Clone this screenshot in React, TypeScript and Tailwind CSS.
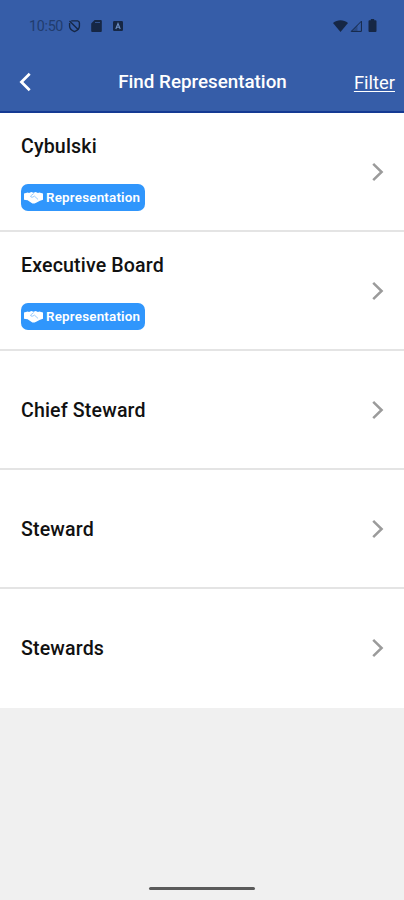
interface Group {
  name: string;
  representation?: boolean;
}

const GROUPS: Group[] = [
  { name: "Cybulski", representation: true },
  { name: "Executive Board", representation: true },
  { name: "Chief Steward" },
  { name: "Steward" },
  { name: "Stewards" },
];

function StatusBar() {
  return (
    <div className="flex h-[52px] items-center justify-between pl-[29px] pr-[26px] text-[#162745]">
      <div className="flex items-center">
        <span className="w-[34px] whitespace-nowrap pt-px text-[14.3px] leading-none tracking-[-0.3px] text-[#213c6e]">10:50</span>
        <svg className="ml-[5px]" width="13" height="14" viewBox="0 0 13 14" fill="none" stroke="currentColor" strokeWidth="1.4">
          <path d="M3.2 1.9H9.6Q11.4 2.2 11.4 4V7.2C11.4 9.7 9.3 11.4 6.5 12.6 3.7 11.4 1.6 9.7 1.6 7.2V4" />
          <path d="M1.5 2 10.4 10.8" />
        </svg>
        <svg className="ml-[10px]" width="11" height="12" viewBox="0 0 11 12" fill="currentColor">
          <path d="M3.6 0H9.8a1 1 0 0 1 1 1V11a1 1 0 0 1-1 1H1.2a1 1 0 0 1-1-1V3.4Z" />
          <path d="M4 2.5h5" stroke="#315390" strokeWidth="1" />
        </svg>
        <svg className="ml-[11px]" width="10" height="10" viewBox="0 0 10 10">
          <rect width="10" height="10" rx="1.2" fill="currentColor" />
          <path d="M2.8 8 5 2.5 7.2 8M3.7 6.2h2.6" fill="none" stroke="#6e91c6" strokeWidth="1.1" />
        </svg>
      </div>
      <div className="flex items-center pb-px">
        <svg width="15" height="12" viewBox="0 0 15 12" fill="currentColor">
          <path d="M0 3C4.3-.7 10.7-.7 15 3L7.5 12Z" />
        </svg>
        <svg className="ml-[2px]" width="12" height="12" viewBox="0 0 12 12" fill="none" stroke="currentColor">
          <path d="M1.2 11.4 11.4 1.2V11.4Z" strokeWidth="1" />
          <path d="M1.2 11.4 7.5 5.1V11.4Z" fill="currentColor" fillOpacity=".35" stroke="none" />
        </svg>
        <svg className="ml-[6px] mr-px" width="9" height="13" viewBox="0 0 9 13" fill="currentColor">
          <path d="M2.8 0h3.4v1.3H7.5a1 1 0 0 1 1 1V12a1 1 0 0 1-1 1h-6a1 1 0 0 1-1-1V2.3a1 1 0 0 1 1-1H2.8Z" />
        </svg>
      </div>
    </div>
  );
}

function Header() {
  return (
    <header className="h-[113px] border-b-2 border-[#143a93] bg-[#365da8] text-white">
      <StatusBar />
      <div className="grid h-[60px] grid-cols-[100px_1fr_100px] items-center">
        <button type="button" aria-label="Back" className="pl-[19px]">
          <svg width="13" height="20" viewBox="0 0 13 20" fill="none" stroke="currentColor" strokeWidth="2.7">
            <path d="M10.7 1.8 2.4 10 10.7 18.2" />
          </svg>
        </button>
        <h1 className="whitespace-nowrap pl-px text-center text-[18.8px] font-medium leading-6">Find Representation</h1>
        <button type="button" className="pr-[9px] pt-px text-right text-[18.4px] leading-6 underline decoration-1 underline-offset-2">
          Filter
        </button>
      </div>
    </header>
  );
}

function HandshakeIcon() {
  return (
    <svg className="shrink-0" width="19" height="13" viewBox="0 0 19 13">
      <path
        fill="currentColor"
        d="M0 2.5 3.8 1.4 5 2 7.3 1 9.5 1.8 11.7 1 14 2 15.2 1.4 19 2.5V8.8L16 9.7 14.6 10.4 12.7 11.6 10.6 12.4 8.4 12.4 5.8 10.8 3.6 9.3 0 8.8Z"
      />
      <path
        fill="none"
        stroke="#3096fc"
        strokeOpacity="0.7"
        strokeWidth="0.7"
        strokeLinecap="round"
        strokeLinejoin="round"
        d="M9.4 2.8 6.6 5Q6.8 6.8 8.8 6.1L10.4 5.1 13.8 8.2"
      />
    </svg>
  );
}

function GroupRow({ name, representation }: Group) {
  return (
    <li className="flex h-[119px] items-center justify-between border-b-2 border-[#e4e4e4] bg-white pl-[21px] pr-5 last:border-white">
      <div className="flex flex-col items-start gap-6">
        <span className="pt-[2px] text-[19.6px] font-medium leading-[26px] tracking-[0.15px] text-[#111]">{name}</span>
        {representation ? (
          <span className="flex h-[27px] w-[124px] items-center gap-[3px] rounded-[7px] bg-[#3096fc] pl-[3px] text-white">
            <HandshakeIcon />
            <span className="pt-px text-[13.4px] font-semibold leading-none tracking-[0.2px]">Representation</span>
          </span>
        ) : null}
      </div>
      <svg width="13" height="20" viewBox="0 0 13 20" fill="none" stroke="#9b9b9b" strokeWidth="2.5">
        <path d="M2.2 1.8 10.6 10 2.2 18.2" />
      </svg>
    </li>
  );
}

export default function App() {
  return (
    <div className="flex h-[900px] w-[404px] flex-col overflow-hidden bg-[#f0f0f0] font-['Roboto',sans-serif]">
      <Header />
      <ul>
        {GROUPS.map((group) => (
          <GroupRow key={group.name} {...group} />
        ))}
      </ul>
      <div className="mx-auto mb-[10px] mt-auto h-[3px] w-[106px] rounded-full bg-[#5a5a5a]" />
    </div>
  );
}
